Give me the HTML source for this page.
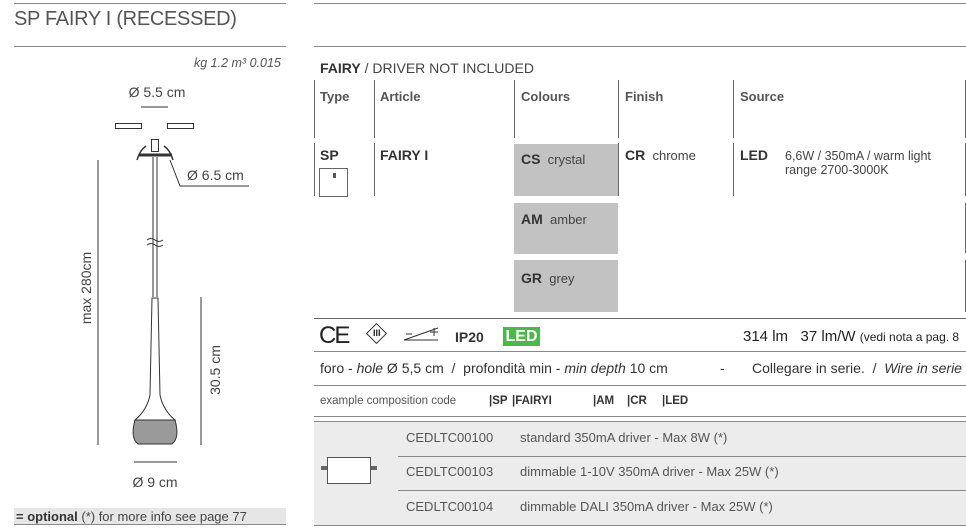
<!DOCTYPE html>
<html><head><meta charset="utf-8"><style>
*{margin:0;padding:0;box-sizing:border-box}
body{width:966px;height:530px;background:#fff;font-family:"Liberation Sans",sans-serif;color:#444;position:relative;overflow:hidden}
.a{position:absolute;white-space:nowrap}
.h{position:absolute;height:1px;background:#888}
.v{position:absolute;width:1px;background:#666}
.g{position:absolute;background:#c2c2c2}
b{font-weight:bold;color:#333}
.s13{font-size:13px}
.ex{position:absolute;top:395px;font-size:11.5px;font-weight:bold;color:#333}
</style></head><body>
<div class="h" style="left:14px;top:3px;width:272px"></div>
<div class="h" style="left:14px;top:46px;width:272px"></div>
<div class="h" style="left:314px;top:3px;width:652px"></div>
<div class="h" style="left:314px;top:46px;width:652px"></div>
<div class="a" style="left:14px;top:8px;font-size:20px;color:#555;letter-spacing:-0.3px">SP FAIRY I (RECESSED)</div>
<div class="a" style="left:194px;top:56px;font-size:12.5px;font-style:italic;color:#555">kg 1.2 m³ 0.015</div>

<svg class="a" style="left:0;top:0" width="310" height="500">
<g stroke="#333" fill="none" stroke-width="1">
<line x1="141" y1="107" x2="168" y2="107"/>
<rect x="115.5" y="123.5" width="26" height="5"/>
<rect x="167.5" y="123.5" width="26" height="5"/>
<path d="M137 160 Q140 150 146 146 M173 160 Q170 150 164 146" stroke-width="1.5"/>
<rect x="151.5" y="139.5" width="7" height="12" fill="#fff"/>
<line x1="139" y1="155" x2="172" y2="155" stroke-width="3"/>
<line x1="153" y1="157" x2="153" y2="297"/><line x1="157" y1="157" x2="157" y2="297"/>
<path d="M147 240 q4 -3 8 0 t8 0 M147 245 q4 -3 8 0 t8 0"/>
<path d="M152 298 L158 298 L160 395 Q163 410 175 420 L135 420 Q147 410 150 395 Z"/>
<path d="M135 420 Q130 438 138 444 L172 444 Q180 438 175 420 Z" fill="#9a9a9a"/>
<path d="M170 160 L180 186 L249 186"/>
<line x1="98" y1="160" x2="98" y2="445"/>
<line x1="201" y1="297" x2="201" y2="445"/>
<line x1="134" y1="462" x2="177" y2="462"/>
</g>
<text x="157" y="97" font-size="14" text-anchor="middle" fill="#444" font-family="Liberation Sans">Ø 5.5 cm</text>
<text x="187" y="180" font-size="14" fill="#444" font-family="Liberation Sans">Ø 6.5 cm</text>
<text x="155" y="487" font-size="14" text-anchor="middle" fill="#444" font-family="Liberation Sans">Ø 9 cm</text>
<text transform="translate(91,288) rotate(-90)" font-size="14" text-anchor="middle" fill="#444" font-family="Liberation Sans">max 280cm</text>
<text transform="translate(220,370) rotate(-90)" font-size="14" text-anchor="middle" fill="#444" font-family="Liberation Sans">30.5 cm</text>
</svg>

<div class="a" style="left:14px;top:508px;width:272px;height:17px;background:#e6e6e6;font-size:13px;padding:1px 2px;border-bottom:1px solid #888"><b>= optional</b> (*) for more info see page 77</div>

<div class="a" style="left:320px;top:60px;font-size:14px"><b>FAIRY</b> / DRIVER NOT INCLUDED</div>
<div class="v" style="left:314px;top:80px;height:58px"></div>
<div class="v" style="left:314px;top:143px;height:53px"></div>
<div class="v" style="left:374px;top:80px;height:58px"></div>
<div class="v" style="left:374px;top:143px;height:53px"></div>
<div class="v" style="left:514px;top:80px;height:58px"></div>
<div class="v" style="left:618px;top:80px;height:58px"></div>
<div class="v" style="left:618px;top:143px;height:53px"></div>
<div class="v" style="left:733px;top:80px;height:58px"></div>
<div class="v" style="left:733px;top:143px;height:53px"></div>
<div class="v" style="left:965px;top:80px;height:58px"></div>
<div class="v" style="left:965px;top:143px;height:53px"></div>
<div class="v" style="left:965px;top:203px;height:50px"></div>
<div class="v" style="left:965px;top:260px;height:52px"></div>
<div class="a s13" style="left:320px;top:89px"><b style="color:#555">Type</b></div>
<div class="a s13" style="left:380px;top:89px"><b style="color:#555">Article</b></div>
<div class="a s13" style="left:521px;top:89px"><b style="color:#555">Colours</b></div>
<div class="a s13" style="left:625px;top:89px"><b style="color:#555">Finish</b></div>
<div class="a s13" style="left:740px;top:89px"><b style="color:#555">Source</b></div>
<div class="g" style="left:514px;top:144px;width:104px;height:52px"></div>
<div class="g" style="left:514px;top:203px;width:104px;height:51px"></div>
<div class="g" style="left:514px;top:260px;width:104px;height:52px"></div>
<div class="a" style="left:320px;top:147px;font-size:14px"><b>SP</b></div>
<div class="a" style="left:319px;top:168px;width:29px;height:29px;border:1px solid #666"><div style="position:absolute;left:13px;top:4px;width:3px;height:5px;background:#555"></div></div>
<div class="a" style="left:380px;top:147px;font-size:14px"><b>FAIRY I</b></div>
<div class="a" style="left:521px;top:151px;font-size:13px"><b style="font-size:14px">CS</b>&nbsp; crystal</div>
<div class="a" style="left:521px;top:211px;font-size:13px"><b style="font-size:14px">AM</b>&nbsp; amber</div>
<div class="a" style="left:521px;top:270px;font-size:13px"><b style="font-size:14px">GR</b>&nbsp; grey</div>
<div class="a" style="left:625px;top:147px;font-size:13px"><b style="font-size:14px">CR</b>&nbsp; chrome</div>
<div class="a" style="left:740px;top:147px;font-size:14px"><b>LED</b></div>
<div class="a" style="left:785px;top:149px;font-size:12.5px;line-height:14px">6,6W / 350mA / warm light<br>range 2700-3000K</div>
<div class="h" style="left:314px;top:318px;width:652px;background:#666"></div>

<div class="a" style="left:319px;top:322px;font-size:24px;color:#222;letter-spacing:-2px">CE</div>
<div class="a" style="left:369px;top:326px;width:15px;height:15px;border:1.5px solid #333;transform:rotate(45deg)"></div>
<div class="a" style="left:373px;top:328px;font-size:9px;font-weight:bold;color:#222">III</div>
<svg class="a" style="left:402px;top:326px" width="40" height="22"><g stroke="#333" fill="none"><line x1="2" y1="14" x2="36" y2="2"/><line x1="2" y1="14" x2="36" y2="14"/><line x1="4" y1="8" x2="10" y2="8"/><line x1="28" y1="6" x2="36" y2="6"/><line x1="32" y1="2" x2="32" y2="10"/></g></svg>
<div class="a" style="left:455px;top:329px;font-size:14px"><b>IP20</b></div>
<div class="a" style="left:503px;top:327px;width:37px;height:19px;background:#4cb84c;color:#fff;font-size:16px;font-weight:bold;text-align:center;line-height:19px">LED</div>
<div class="a" style="left:743px;top:328px;font-size:15px;color:#222">314 lm&nbsp;&nbsp; 37 lm/W <span style="font-size:12px">(vedi nota a pag. 8</span></div>
<div class="h" style="left:314px;top:351px;width:652px"></div>
<div class="a" style="left:320px;top:360px;font-size:14px;color:#333">foro - <i>hole</i> Ø 5,5 cm&nbsp; / &nbsp;profondità min - <i>min depth</i> 10 cm</div>
<div class="a" style="left:720px;top:360px;font-size:14px;color:#333">-</div>
<div class="a" style="left:752px;top:360px;font-size:14px;color:#333">Collegare in serie. &nbsp;/ &nbsp;<i>Wire in serie</i></div>
<div class="h" style="left:314px;top:385px;width:652px"></div>
<div class="a" style="left:320px;top:395px;font-size:11.5px;color:#555">example composition code</div>
<div class="ex" style="left:489px">|SP</div>
<div class="ex" style="left:512px">|FAIRYI</div>
<div class="ex" style="left:593px">|AM</div>
<div class="ex" style="left:627px">|CR</div>
<div class="ex" style="left:662px">|LED</div>
<div class="h" style="left:314px;top:416px;width:652px"></div>
<div class="a" style="left:314px;top:421px;width:652px;height:105px;background:#ececec;border-top:1px solid #888;border-bottom:1px solid #888"></div>
<div class="h" style="left:398px;top:456px;width:568px"></div>
<div class="h" style="left:398px;top:490px;width:568px"></div>
<div class="a" style="left:327px;top:457px;width:44px;height:27px;border:1px solid #555;background:#fff"></div>
<div class="a" style="left:321px;top:466px;width:6px;height:4px;background:#666"></div>
<div class="a" style="left:371px;top:466px;width:6px;height:4px;background:#666"></div>
<div class="a" style="left:406px;top:430px;font-size:13px;color:#555">CEDLTC00100</div>
<div class="a" style="left:520px;top:430px;font-size:13px;color:#555">standard 350mA driver - Max 8W (*)</div>
<div class="a" style="left:406px;top:464px;font-size:13px;color:#555">CEDLTC00103</div>
<div class="a" style="left:520px;top:464px;font-size:13px;color:#555">dimmable 1-10V 350mA driver - Max 25W (*)</div>
<div class="a" style="left:406px;top:499px;font-size:13px;color:#555">CEDLTC00104</div>
<div class="a" style="left:520px;top:499px;font-size:13px;color:#555">dimmable DALI 350mA driver - Max 25W (*)</div>
</body></html>
